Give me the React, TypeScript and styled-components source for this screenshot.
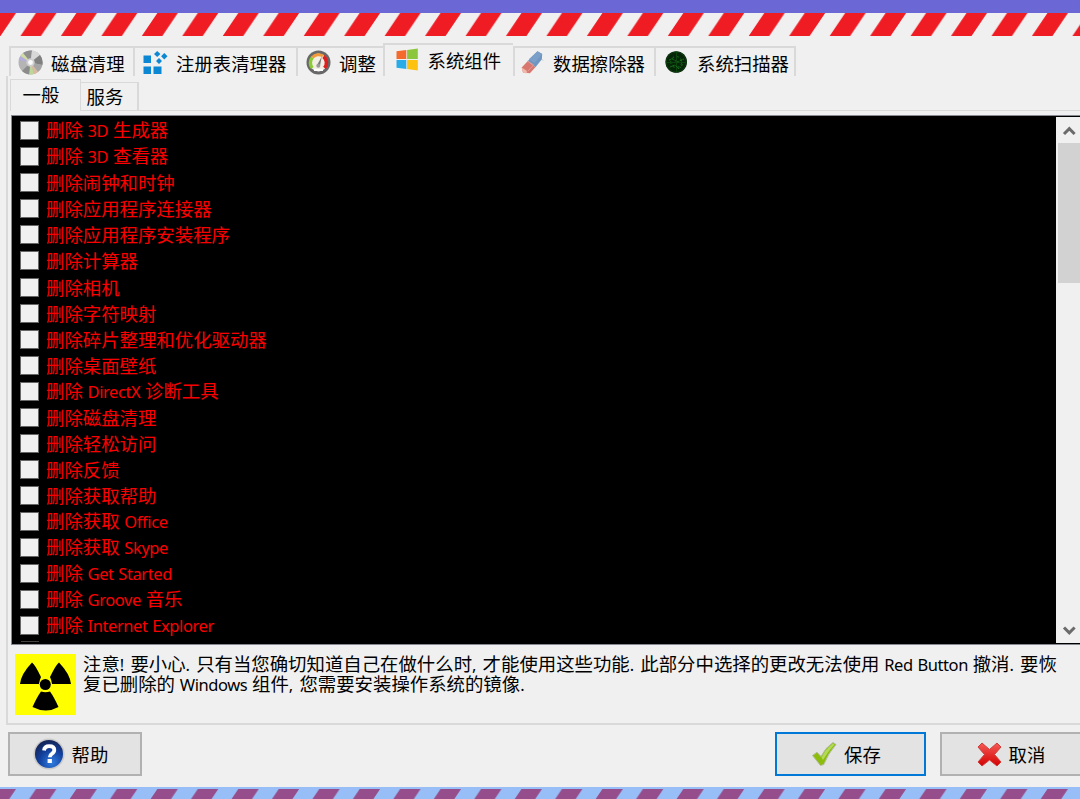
import { ReactNode, useState } from "react";
import styled, { createGlobalStyle } from "styled-components";

const COLORS = {
  SURFACE: "#f0f0f0",
  LINE: "#d9d9d9",
  BUTTON: "#e3e3e3",
  BUTTON_BORDER: "#b1b1b1",
  ACCENT: "#0078d7",
  DANGER_TEXT: "#fa0000",
};

const COMPONENTS = [
  "删除 3D 生成器",
  "删除 3D 查看器",
  "删除闹钟和时钟",
  "删除应用程序连接器",
  "删除应用程序安装程序",
  "删除计算器",
  "删除相机",
  "删除字符映射",
  "删除碎片整理和优化驱动器",
  "删除桌面壁纸",
  "删除 DirectX 诊断工具",
  "删除磁盘清理",
  "删除轻松访问",
  "删除反馈",
  "删除获取帮助",
  "删除获取 Office",
  "删除获取 Skype",
  "删除 Get Started",
  "删除 Groove 音乐",
  "删除 Internet Explorer",
];

const WARNING_LINES = [
  "注意! 要小心. 只有当您确切知道自己在做什么时, 才能使用这些功能. 此部分中选择的更改无法使用 Red Button 撤消. 要恢",
  "复已删除的 Windows 组件, 您需要安装操作系统的镜像.",
];

// Latin runs are set smaller than the Chinese text around them
function MixedText({ children }: { children: string }) {
  return (
    <>
      {children.split(/([\x20-\x7e]+)/).map((part, index) =>
        index % 2 === 1 ? (
          <S.Latin key={index} $punctuation={!/\w/.test(part)}>
            {part}
          </S.Latin>
        ) : (
          part
        )
      )}
    </>
  );
}

function Stripes({ id, color, height }: { id: string; color: string; height: number }) {
  return (
    <S.Stripes height={height} aria-hidden="true">
      <defs>
        <pattern id={id} width="40.46" height="23" patternUnits="userSpaceOnUse">
          <path
            d="M-4.5 0H16L.5 23H-20ZM35.96 0H56.46L40.96 23H20.46Z"
            fill={color}
          />
        </pattern>
      </defs>
      <rect width="100%" height={height} fill={`url(#${id})`} />
    </S.Stripes>
  );
}

function DiscIcon() {
  return (
    <svg width="25" height="25" viewBox="0 0 25 25">
      <circle cx="12.5" cy="12.5" r="12" fill="#b4b4b4" />
      <path d="M12.5 12.5 5 3A12 12 0 0 1 14 .6Z" fill="#8f8f8f" />
      <path d="M12.5 12.5 14 .6A12 12 0 0 1 22 5Z" fill="#d8d8d8" />
      <path d="M12.5 12.5 22 5A12 12 0 0 1 24.4 15Z" fill="#808080" />
      <path d="M12.5 12.5 24.4 15A12 12 0 0 1 20 22Z" fill="#a5a5a5" />
      <path d="M12.5 12.5 20 22A12 12 0 0 1 16 24Z" fill="#dcb8a0" />
      <path d="M12.5 12.5 16 24A12 12 0 0 1 11 24.4Z" fill="#bcd79a" />
      <path d="M12.5 12.5 11 24.4A12 12 0 0 1 4 21Z" fill="#8b8b8b" />
      <path d="M12.5 12.5 .7 10A12 12 0 0 1 2.5 6Z" fill="#b4aedc" />
      <path d="M12.5 12.5 2.5 6A12 12 0 0 1 5 3Z" fill="#cfdca2" />
      <circle cx="12.5" cy="12.5" r="4.2" fill="#cfcfcf" />
      <circle cx="12.5" cy="12.5" r="2.4" fill="#fafafa" />
    </svg>
  );
}

function RegistryIcon() {
  return (
    <svg width="25" height="25" viewBox="0 0 25 25" fill="#0c87d4">
      <path d="M.5 5.500H8V13H.5zM.5 16.500H8V24H.5zM10.500 16.500h8V24h-8z" />
      <path d="m14.200 1 3.200 3-3.200 3-3.200-3zM21.300 3l3.200 3.200-3.200 3.200-3.200-3.200zM16 8l3 3-3 3-3-3z" />
    </svg>
  );
}

function GaugeIcon() {
  return (
    <svg width="25" height="25" viewBox="0 0 25 25">
      <circle cx="12.5" cy="12.5" r="12" fill="#686868" />
      <circle cx="12.5" cy="12.5" r="9" fill="#f3eee4" />
      <path d="M6.3 18A8 8 0 0 1 6.5 7.4" fill="none" stroke="#8ccb35" strokeWidth="3.4" />
      <path d="M6.5 7.4A8 8 0 0 1 17 6" fill="none" stroke="#f29a3b" strokeWidth="3" />
      <path d="M17.5 6.5A8 8 0 0 1 18.5 18" fill="none" stroke="#dc2020" strokeWidth="3.6" />
      <path d="m15.8 6.5-5 9 3 1z" fill="#777" />
      <circle cx="12.3" cy="15.7" r="2" fill="#999" />
      <path d="M8 19h9v2H8z" fill="#fff" />
    </svg>
  );
}

function WindowsIcon() {
  return (
    <svg width="23" height="23" viewBox="0 0 23 23">
      <path d="M.5 3.2 10.3 2v9H.5z" fill="#f4692c" />
      <path d="M11.1 1.9 21.800.4V11H11.1z" fill="#8cc63c" />
      <path d="M.5 12h9.8v9L.5 19.8z" fill="#29abe8" />
      <path d="M11.1 12h10.7v10.5l-10.7-1.4z" fill="#fdc110" />
    </svg>
  );
}

function EraserIcon() {
  return (
    <svg width="25" height="25" viewBox="0 0 25 25">
      <path d="m17.5 1.2 4.7 2.8-.3 5.2-6.5 8-7.8-6z" fill="#6f96c2" />
      <path d="m17.5 1.2 4.7 2.8-7.8 9-5.6-3.8z" fill="#7a9fc8" />
      <path d="m7.6 11.2 7.8 6-5.5 6-6.9-.7-1.3-5z" fill="#d77770" />
      <path d="m1.7 17.5 5 3.2L7 23.5l-4-1z" fill="#efb9ab" />
      <path d="m7.6 11.2 6 3.7-5.8 6.4" fill="none" stroke="#e79993" />
      <path d="m21.8 9 1.5 1.8" stroke="#d1d1d1" />
    </svg>
  );
}

function RadarIcon() {
  return (
    <svg width="23" height="23" viewBox="0 0 23 23">
      <circle cx="11.2" cy="11" r="10.8" fill="#062408" />
      <g fill="none" stroke="#167018">
        <circle cx="11.2" cy="11" r="10" stroke="#0b3b0d" />
        <circle cx="11.2" cy="11" r="5.5" strokeDasharray="3 2" />
        <path d="M11.5 1v20M1 11.5h20" stroke="#0c440e" />
        <path d="m4 9 4-1 4 3 7-3M5 16l5-2 4 4 4-5" strokeDasharray="2 1" />
      </g>
    </svg>
  );
}

function RadiationIcon() {
  return (
    <S.RadiationIcon viewBox="0 0 61 61">
      <path d="M0 0h61v61H0z" fill="#ff0" />
      <circle cx="30.3" cy="30.5" r="5.5" />
      <path d="M5 30Q6 20 17 8.500Q20 10.500 26 23Q24.500 26 24 30ZM56 30Q55 20 44 8.500Q41 10.500 35 23Q36.500 26 37 30Z" />
      <path d="M26 37.500Q30.500 39 35 37.500Q39 43 43.500 53Q31 60 17.500 53Q22 43 26 37.500Z" />
    </S.RadiationIcon>
  );
}

function HelpIcon() {
  return (
    <svg width="32" height="32" viewBox="0 0 32 32">
      <defs>
        <radialGradient id="help" cx="60%" cy="80%" r="75%">
          <stop offset="0" stopColor="#2f7de0" />
          <stop offset=".6" stopColor="#123f9c" />
          <stop offset="1" stopColor="#14275d" />
        </radialGradient>
      </defs>
      <circle cx="16" cy="16" r="15.600" fill="#c9c9c9" />
      <circle cx="16" cy="16" r="14" fill="url(#help)" />
      <path
        d="M11 12.500q.5-4.300 5.300-4.300 5 0 5 3.900 0 2.300-2.500 3.700-2 1.200-2 3.400"
        fill="none"
        stroke="#fff"
        strokeWidth="3.800"
      />
      <path d="M14.600 21h4.300v4h-4.300z" fill="#fff" />
    </svg>
  );
}

function CheckIcon() {
  return (
    <svg width="26" height="26" viewBox="0 0 26 26">
      <path
        d="M1.500 14.500 6 11.200l4 4.300Q14.500 6.500 22 1.500l3 2Q17 12.500 12.800 23.500L9.500 24.500Z"
        fill="#8cbd0c"
        stroke="#b3bba0"
      />
      <path d="M10.500 16.500Q15 7.500 22 2.500l1.500 1Q16.500 11 12 19Z" fill="#b2da57" />
    </svg>
  );
}

function CrossIcon() {
  return (
    <svg width="25" height="25" viewBox="0 0 25 25">
      <defs>
        <linearGradient id="cross" x2="0" y2="1">
          <stop stopColor="#f45a56" />
          <stop offset="1" stopColor="#d40000" />
        </linearGradient>
      </defs>
      <path
        d="m5 1 7.500 6.500L20 1l4 4-6.500 7.500L24 20l-4 4-7.500-6L5 24l-4-4 6.500-7.500L1 5Z"
        fill="url(#cross)"
        stroke="#cf3d3b"
        strokeLinejoin="round"
      />
    </svg>
  );
}

interface TabInfo {
  label: string;
  width: number;
  indent: number;
  icon: ReactNode;
}

const TABS: TabInfo[] = [
  { label: "磁盘清理", width: 124, indent: 7, icon: <DiscIcon /> },
  { label: "注册表清理器", width: 163, indent: 8, icon: <RegistryIcon /> },
  { label: "调整", width: 87, indent: 8, icon: <GaugeIcon /> },
  { label: "系统组件", width: 130, indent: 9.5, icon: <WindowsIcon /> },
  { label: "数据擦除器", width: 141, indent: 5, icon: <EraserIcon /> },
  { label: "系统扫描器", width: 142, indent: 8, icon: <RadarIcon /> },
];

function App() {
  const [activeTab, setActiveTab] = useState(3);
  const [selected, setSelected] = useState<string[]>([]);

  const toggleSelection = (name: string) => {
    setSelected((prev) =>
      prev.includes(name) ? prev.filter((item) => item !== name) : [...prev, name]
    );
  };

  return (
    <S.Window>
      <GlobalStyle />
      <S.TitleStrip />
      <Stripes id="top-stripes" color="#ef1c24" height={23} />

      <S.TabList>
        {TABS.map((tab, index) => (
          <S.Tab
            key={tab.label}
            $active={index === activeTab}
            $last={index === TABS.length - 1}
            $width={tab.width}
            $indent={tab.indent}
            onClick={() => setActiveTab(index)}
          >
            <S.TabIcon>{tab.icon}</S.TabIcon>
            {tab.label}
          </S.Tab>
        ))}
      </S.TabList>

      <S.Panel>
        <S.SubTabList>
          <S.SubTab $active>一般</S.SubTab>
          <S.SubTab>服务</S.SubTab>
          <S.SubTabRest />
        </S.SubTabList>

        <S.ListBox>
          <S.List>
            {COMPONENTS.map((name) => (
              <S.Row key={name}>
                <S.Checkbox
                  type="checkbox"
                  checked={selected.includes(name)}
                  onChange={() => toggleSelection(name)}
                />
                <S.RowLabel>
                  <MixedText>{name}</MixedText>
                </S.RowLabel>
              </S.Row>
            ))}
            <S.NextRowEdge />
          </S.List>
          <S.ScrollBar>
            <S.ScrollArrow viewBox="0 0 24 26">
              <path d="m8 17 5.300-5.300 5.300 5.300" />
            </S.ScrollArrow>
            <S.Thumb />
            <S.ScrollArrow viewBox="0 0 24 26">
              <path d="m8 10.500 5.300 5.300 5.300-5.300" />
            </S.ScrollArrow>
          </S.ScrollBar>
        </S.ListBox>

        <S.Warning>
          <RadiationIcon />
          <S.WarningText>
            {WARNING_LINES.map((line) => (
              <S.WarningLine key={line}>
                <MixedText>{line}</MixedText>
              </S.WarningLine>
            ))}
          </S.WarningText>
        </S.Warning>
      </S.Panel>

      <S.Footer>
        <S.Button $width={134}>
          <HelpIcon />
          帮助
        </S.Button>
        <S.FooterRight>
          <S.Button $width={151} $primary>
            <CheckIcon />
            保存
          </S.Button>
          <S.Button $width={151}>
            <CrossIcon />
            取消
          </S.Button>
        </S.FooterRight>
      </S.Footer>

      <S.BottomStrip>
        <Stripes id="bottom-stripes" color="#954e8b" height={10} />
      </S.BottomStrip>
    </S.Window>
  );
}

export default App;

const GlobalStyle = createGlobalStyle`
  * {
    box-sizing: border-box;
  }

  body {
    margin: 0;
    overflow: hidden;
  }

  button,
  input {
    font: inherit;
    color: inherit;
  }
`;

const S = {
  Window: styled.div`
    display: flex;
    flex-direction: column;
    width: 1080px;
    height: 799px;
    overflow: hidden;
    background-color: ${COLORS.SURFACE};
    color: #000;
    font-family: "Noto Sans CJK SC", "Noto Sans", sans-serif;
    font-size: 18.4px;
    line-height: 22px;
    white-space: nowrap;
  `,

  TitleStrip: styled.div`
    flex: none;
    height: 13px;
    background-color: #6b67d5;
  `,

  Stripes: styled.svg`
    display: block;
    flex: none;
    width: 100%;
  `,

  Latin: styled.span<{ $punctuation: boolean }>`
    font-family: "Noto Sans", sans-serif;
    font-size: 16.5px;
    letter-spacing: -0.42px;
    word-spacing: ${({ $punctuation }) => ($punctuation ? 2.7 : 0.9)}px;
    white-space: pre;
  `,

  TabList: styled.div`
    display: flex;
    flex: none;
    align-items: flex-end;
    height: 40px;
    padding-left: 9px;
  `,

  Tab: styled.button<{
    $active: boolean;
    $last: boolean;
    $width: number;
    $indent: number;
  }>`
    display: flex;
    align-items: center;
    gap: 8px;
    width: ${({ $width }) => $width}px;
    height: ${({ $active }) => ($active ? 33 : 30)}px;
    padding: ${({ $active }) => ($active ? "0 0 2px" : "1px 0 0")};
    padding-left: ${({ $indent }) => $indent}px;
    border: 0 solid ${COLORS.LINE};
    border-top-width: 2px;
    border-left-width: 2px;
    border-right-width: ${({ $last }) => ($last ? 2 : 0)}px;
    background: none;
  `,

  TabIcon: styled.span`
    display: flex;
    justify-content: center;
    flex: none;
    width: 25px;
  `,

  Panel: styled.div`
    display: flex;
    flex-direction: column;
    flex: none;
    height: 649px;
    margin-left: 6px;
    padding: 4px 0 0 4px;
    border-bottom: 2px solid ${COLORS.LINE};
    border-left: 2px solid ${COLORS.LINE};
  `,

  SubTabList: styled.div`
    display: flex;
    flex: none;
    align-items: flex-end;
    height: 31px;
    margin-left: -2px;
  `,

  SubTab: styled.button<{ $active?: boolean }>`
    width: ${({ $active }) => ($active ? 71 : 58)}px;
    height: ${({ $active }) => ($active ? 32 : 29)}px;
    padding: ${({ $active }) => ($active ? "0 9px 4px 0" : "0 8px 1px 0")};
    border: solid ${COLORS.LINE};
    border-width: ${({ $active }) => ($active ? "1px 1px 0 1px" : "1px 2px 1px 0")};
    background: none;
  `,

  SubTabRest: styled.div`
    flex: 1;
    border-bottom: 1px solid ${COLORS.LINE};
  `,

  ListBox: styled.div`
    display: flex;
    flex: none;
    height: 530px;
    margin-top: 4px;
    margin-left: -1px;
    border: solid #858990;
    border-width: 1px 0 1px 1px;
    background-color: #000;
  `,

  List: styled.div`
    flex: 1;
    padding: 1.8px 0 0 9px;
    overflow: hidden;
  `,

  Row: styled.label`
    display: flex;
    align-items: center;
    height: 26.04px;
    color: ${COLORS.DANGER_TEXT};
  `,

  RowLabel: styled.span`
    padding-bottom: 1px;
  `,

  Checkbox: styled.input`
    appearance: none;
    flex: none;
    width: 19px;
    height: 19px;
    margin: 0 7px 0 -1px;
    border: 1px solid #666;
    background-color: ${COLORS.SURFACE};

    &:checked {
      box-shadow: inset 0 0 0 4px ${COLORS.SURFACE};
      background-color: #222;
    }
  `,

  NextRowEdge: styled.div`
    width: 18px;
    height: 1px;
    margin-top: 3px;
    background-color: #444;
  `,

  ScrollBar: styled.div`
    display: flex;
    flex-direction: column;
    width: 24px;
    margin: 1px 0;
    background-color: ${COLORS.SURFACE};
  `,

  ScrollArrow: styled.svg`
    flex: none;
    width: 24px;
    height: 26px;
    fill: none;
    stroke: #6b6b6b;
    stroke-width: 3;
  `,

  Thumb: styled.div`
    height: 140px;
    margin: 0 0 auto 2px;
    background-color: #d2d2d2;
  `,

  Warning: styled.div`
    display: flex;
    padding: 9px 0 0 3px;
  `,

  RadiationIcon: styled.svg`
    flex: none;
    width: 61px;
    height: 61px;
  `,

  WarningText: styled.div`
    padding-left: 7px;
  `,

  WarningLine: styled.div`
    height: 20px;
    line-height: 19px;
  `,

  Footer: styled.div`
    display: flex;
    flex: none;
    justify-content: space-between;
    height: 62px;
    padding: 7px 0 0 8px;
  `,

  FooterRight: styled.div`
    display: flex;
    gap: 14px;
    margin-right: -11px;
  `,

  Button: styled.button<{ $width: number; $primary?: boolean }>`
    display: flex;
    align-items: center;
    justify-content: center;
    gap: 7px;
    width: ${({ $width }) => $width}px;
    height: 44px;
    padding: 0 9px 0 0;
    border: 2px solid
      ${({ $primary }) => ($primary ? COLORS.ACCENT : COLORS.BUTTON_BORDER)};
    background-color: ${COLORS.BUTTON};
  `,

  BottomStrip: styled.div`
    flex: none;
    height: 12px;
    padding-top: 2px;
    background-color: #98bef8;
  `,
};
